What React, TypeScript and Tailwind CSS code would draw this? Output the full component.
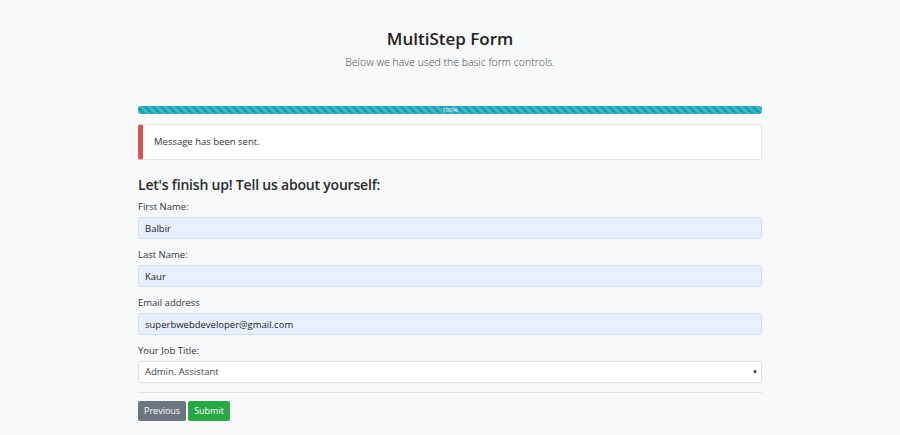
import { useState } from "react";

const font = { fontFamily: '"Open Sans", "Noto Sans", sans-serif' };

function Field({ label, value }: { label: string; value: string }) {
  return (
    <div className="flex flex-col">
      <label className="mb-[3px] text-[9.5px] leading-[14px] text-[#333]">{label}</label>
      <input
        defaultValue={value}
        className="block h-[22px] w-full rounded-[3px] border border-[#d8dee6] bg-[#e8f0fe] px-[6px] text-[9.5px] text-[#222] outline-none"
      />
    </div>
  );
}

export default function App() {
  const [job, setJob] = useState("Admin. Assistant");

  return (
    <div className="min-h-[435px] w-full bg-[#f8f9fa]" style={font}>
      <div className="mx-auto w-[624px] pt-[27px]">
        {/* header */}
        <div className="flex flex-col items-center">
          <h1 className="text-[17px] font-semibold leading-[24px] text-[#222]">MultiStep Form</h1>
          <p className="mt-[3px] text-[10.5px] font-light leading-[16px] text-[#444]">
            Below we have used the basic form controls.
          </p>
        </div>

        {/* progress */}
        <div className="mt-[36px] h-[8px] w-full overflow-hidden rounded-[3px] bg-[#e9ecef]">
          <div className="flex h-full w-full items-center justify-center bg-[#17a2b8] bg-[linear-gradient(45deg,rgba(255,255,255,.18)_25%,transparent_25%,transparent_50%,rgba(255,255,255,.18)_50%,rgba(255,255,255,.18)_75%,transparent_75%,transparent)] bg-[length:8px_8px]">
            <span className="text-[6px] leading-none text-white">100%</span>
          </div>
        </div>

        {/* alert */}
        <div className="mt-[10px] flex h-[36px] items-center rounded-[3px] border border-[#e1e4e8] border-l-[5px] border-l-[#d9534f] bg-white pl-[11px] text-[9.5px] text-[#333]">
          Message has been sent.
        </div>

        {/* form */}
        <h2 className="mt-[15px] text-[14px] font-semibold leading-[20px] tracking-[-0.2px] text-[#2a2a2a]">
          Let's finish up! Tell us about yourself:
        </h2>

        <div className="mt-[5px] flex flex-col gap-[9px]">
          <Field label="First Name:" value="Balbir" />
          <Field label="Last Name:" value="Kaur" />
          <Field label="Email address" value="superbwebdeveloper@gmail.com" />
          <div className="flex flex-col">
            <label className="mb-[3px] text-[9.5px] leading-[14px] text-[#333]">Your Job Title:</label>
            <div className="relative">
              <select
                value={job}
                onChange={(e) => setJob(e.target.value)}
                className="block h-[22px] w-full appearance-none rounded-[3px] border border-[#d8dee6] bg-white px-[6px] text-[9.5px] text-[#444] outline-none"
              >
                <option>Admin. Assistant</option>
                <option>Web Developer</option>
                <option>Designer</option>
              </select>
              <span className="pointer-events-none absolute right-[4px] top-[8px] text-[6px] leading-none text-[#222]">▼</span>
            </div>
          </div>
        </div>

        <div className="mt-[9px] border-t border-[#dfe3e7]" />

        <div className="mt-[8px] flex gap-[2px]">
          <button className="h-[20px] rounded-[2px] bg-[#6c757d] px-[6px] text-[9px] text-white">Previous</button>
          <button className="h-[20px] rounded-[2px] bg-[#28a745] px-[6px] text-[9px] text-white">Submit</button>
        </div>
      </div>
    </div>
  );
}
